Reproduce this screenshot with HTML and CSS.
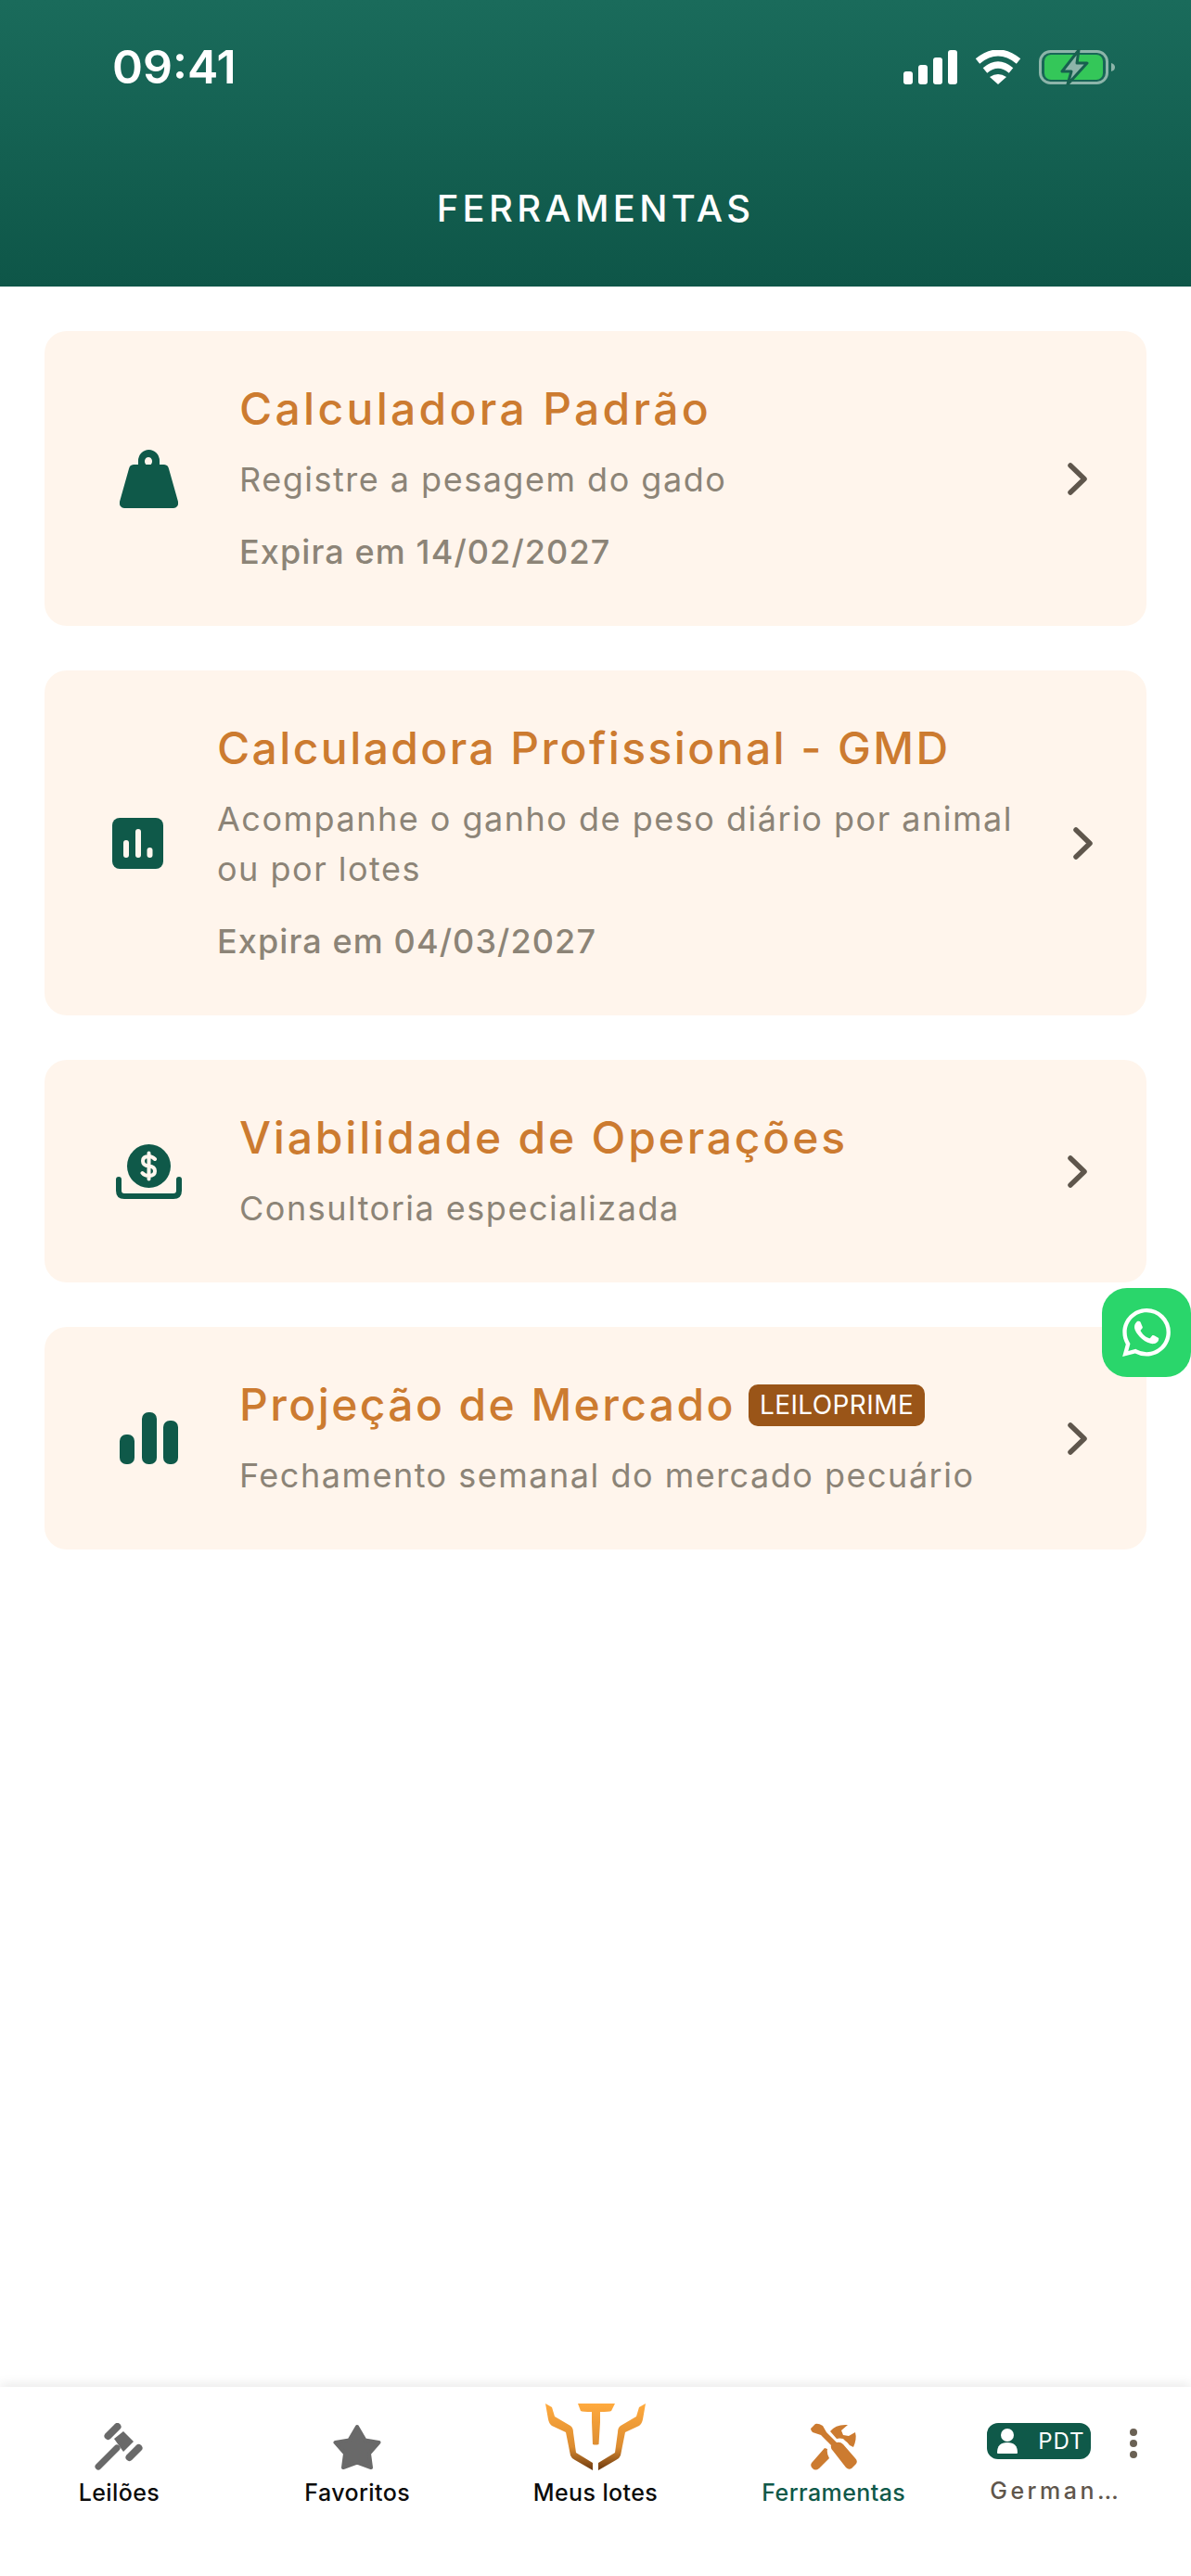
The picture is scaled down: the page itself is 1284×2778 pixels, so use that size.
FILE: index.html
```html
<!DOCTYPE html>
<html lang="pt-BR">
<head>
  <meta charset="UTF-8" />
  <meta name="viewport" content="width=device-width, initial-scale=1.0"/>
  <title>Ferramentas</title>
  <link rel="stylesheet" href="styles.css">
</head>
<body>
  <header class="header">
    <div class="status-bar">
      <span class="status-time">09:41</span>
      <div class="status-icons">
        <svg width="58" height="37" viewBox="0 0 58 37" fill="#fff">
          <rect x="0" y="23" width="10" height="14" rx="3"/>
          <rect x="16" y="16" width="10" height="21" rx="3"/>
          <rect x="32" y="8" width="10" height="29" rx="3"/>
          <rect x="48" y="0" width="10" height="37" rx="3"/>
        </svg>
        <svg width="50" height="37" viewBox="0 0 50 37" fill="none" stroke="#fff" stroke-width="7">
          <path d="M3 12 Q25 -6 47 12"/>
          <path d="M11 22 Q25 10 39 22"/>
          <path d="M16 29 Q25 23 34 29 L25 37Z" fill="#fff" stroke="none"/>
        </svg>
        <svg width="82" height="39" viewBox="0 0 82 39" fill="none">
          <rect x="1.5" y="2.5" width="72" height="34" rx="11" stroke="#8db5aa" stroke-width="3"/>
          <rect x="6" y="6" width="63" height="27" rx="7" fill="#34c759"/>
          <path d="M78 15 Q82 16 82 19.500 Q82 23 78 24Z" fill="#8db5aa"/>
          <path d="M43 1 L25 24 H35 L31 38 L52 15 H41Z" fill="#8db5aa" stroke="#17604f" stroke-width="3" stroke-linejoin="round"/>
        </svg>
      </div>
    </div>
    <h1 class="header-title">FERRAMENTAS</h1>
  </header>

  <main class="tools">
    <a class="card">
      <span class="card-icon">
        <svg width="63" height="63" viewBox="0 0 63 63" fill="#0f5949">
          <path fill-rule="evenodd" d="M20 17 V12 a11.500 12 0 0 1 23 0 V17Z M31 8 a4 4.500 0 1 0 .01 0Z"/>
          <path d="M15 16 H48 a5.500 5.500 0 0 1 5 4.500 L63 56 a5.500 5.500 0 0 1 -5.500 7 H5.500 a5.500 5.500 0 0 1 -5.500 -7 L10 20.500 a5.500 5.500 0 0 1 5 -4.500Z"/>
        </svg>
      </span>
      <div class="card-text">
        <h2 class="card-title title-loose">Calculadora Padrão</h2>
        <p class="card-desc">Registre a pesagem do gado</p>
        <p class="card-expiry">Expira em 14/02/2027</p>
      </div>
      <svg class="chevron" width="21" height="35" viewBox="0 0 21 35" fill="none"><path d="M3 3 L18 17.500 L3 32"/></svg>
    </a>

    <a class="card card-pro">
      <span class="card-icon">
        <svg width="55" height="55" viewBox="0 0 55 55">
          <rect width="55" height="55" rx="8" fill="#0f5949"/>
          <g fill="#fff6ee">
            <rect x="12" y="24" width="6" height="19" rx="3"/>
            <rect x="25" y="12" width="6" height="31" rx="3"/>
            <rect x="37.500" y="32" width="6" height="11" rx="3"/>
          </g>
        </svg>
      </span>
      <div class="card-text">
        <h2 class="card-title title-tight">Calculadora Profissional - GMD</h2>
        <p class="card-desc">Acompanhe o ganho de peso diário por animal<br>ou por lotes</p>
        <p class="card-expiry">Expira em 04/03/2027</p>
      </div>
      <svg class="chevron" width="21" height="35" viewBox="0 0 21 35" fill="none"><path d="M3 3 L18 17.500 L3 32"/></svg>
    </a>

    <a class="card">
      <span class="card-icon">
        <svg width="71" height="59" viewBox="0 0 71 59">
          <circle cx="35.500" cy="23.500" r="23.500" fill="#0f5949"/>
          <path d="M42 16 Q39 13 35.500 13 Q29 13 29 18 Q29 23 35.500 23.500 Q42 24 42 29 Q42 34 35.500 34 Q31 34 28.500 31 M35.500 9.500 V37.500" fill="none" stroke="#fff6ee" stroke-width="4" stroke-linecap="round"/>
          <path d="M3 38 V50 Q3 56 9 56 H62 Q68 56 68 50 V38" fill="none" stroke="#0f5949" stroke-width="6" stroke-linecap="round"/>
        </svg>
      </span>
      <div class="card-text">
        <h2 class="card-title">Viabilidade de Operações</h2>
        <p class="card-desc">Consultoria especializada</p>
      </div>
      <svg class="chevron" width="21" height="35" viewBox="0 0 21 35" fill="none"><path d="M3 3 L18 17.500 L3 32"/></svg>
    </a>

    <a class="card">
      <span class="card-icon">
        <svg width="63" height="56" viewBox="0 0 63 56" fill="#0f5949">
          <rect x="0" y="24" width="16" height="32" rx="7"/>
          <rect x="24" y="0" width="16" height="56" rx="7"/>
          <rect x="47" y="9" width="16" height="47" rx="7"/>
        </svg>
      </span>
      <div class="card-text">
        <div class="card-title-row">
          <h2 class="card-title title-tight">Projeção de Mercado</h2>
          <span class="tag">LEILOPRIME</span>
        </div>
        <p class="card-desc">Fechamento semanal do mercado pecuário</p>
      </div>
      <svg class="chevron" width="21" height="35" viewBox="0 0 21 35" fill="none"><path d="M3 3 L18 17.500 L3 32"/></svg>
    </a>
  </main>

  <a class="whatsapp">
    <svg width="52" height="52" viewBox="0 0 24 24" fill="#fff"><path d="M17.472 14.382c-.297-.149-1.758-.867-2.03-.967-.273-.099-.471-.148-.67.15-.197.297-.767.966-.94 1.164-.173.199-.347.223-.644.075-.297-.15-1.255-.463-2.39-1.475-.883-.788-1.48-1.761-1.653-2.059-.173-.297-.018-.458.13-.606.134-.133.298-.347.446-.52.149-.174.198-.298.298-.497.099-.198.05-.371-.025-.52-.075-.149-.669-1.612-.916-2.207-.242-.579-.487-.5-.669-.51-.173-.008-.371-.01-.57-.01-.198 0-.52.074-.792.372-.272.297-1.04 1.016-1.04 2.479 0 1.462 1.065 2.875 1.213 3.074.149.198 2.096 3.2 5.077 4.487.709.306 1.262.489 1.694.625.712.227 1.36.195 1.871.118.571-.085 1.758-.719 2.006-1.413.248-.694.248-1.289.173-1.413-.074-.124-.272-.198-.57-.347m-5.421 7.403h-.004a9.87 9.87 0 01-5.031-1.378l-.361-.214-3.741.982.998-3.648-.235-.374a9.86 9.86 0 01-1.51-5.26c.001-5.45 4.436-9.884 9.888-9.884 2.64 0 5.122 1.03 6.988 2.898a9.825 9.825 0 012.893 6.994c-.003 5.45-4.437 9.884-9.885 9.884m8.413-18.297A11.815 11.815 0 0012.05 0C5.495 0 .16 5.335.157 11.892c0 2.096.547 4.142 1.588 5.945L.057 24l6.305-1.654a11.882 11.882 0 005.683 1.448h.005c6.554 0 11.89-5.335 11.893-11.893a11.821 11.821 0 00-3.48-8.413z"/></svg>
  </a>

  <nav class="tabbar">
    <a class="tab">
      <span class="tab-icon">
        <svg width="52" height="51" viewBox="0 0 52 51" fill="none" stroke="#696969" stroke-linecap="round">
          <path d="M14.500 14 L24.500 4" stroke-width="8"/>
          <path d="M37.500 37 L47.500 27" stroke-width="8"/>
          <path d="M21 17 L31 9 L42 20 L31 31Z" fill="#696969" stroke="none"/>
          <path d="M4 47 L24 27" stroke-width="7"/>
        </svg>
      </span>
      <span class="tab-label">Leilões</span>
    </a>
    <a class="tab">
      <span class="tab-icon">
        <svg width="52" height="50" viewBox="0 0 52 50"><polygon points="26,3 34.500,17.500 49.500,20 39,32 41,47 26,41.500 11,47 13,32 2.500,20 17.500,17.500" fill="#696969" stroke="#696969" stroke-width="4" stroke-linejoin="round"/></svg>
      </span>
      <span class="tab-label">Favoritos</span>
    </a>
    <a class="tab">
      <span class="tab-icon">
        <svg width="108" height="72" viewBox="0 0 108 72">
          <defs>
            <linearGradient id="logoGrad" gradientUnits="userSpaceOnUse" x1="0" y1="0" x2="0" y2="72">
              <stop offset="0" stop-color="#ffaa3e"/>
              <stop offset=".65" stop-color="#dc8c30"/>
              <stop offset="1" stop-color="#6b380f"/>
            </linearGradient>
          </defs>
          <g fill="url(#logoGrad)">
            <path d="M35 0 H75 L71 8 Q69 9 59 9 L59 20 L57.500 44 Q54 45 51 44 L50 20 L50 9 Q40 9 38 8Z"/>
            <path d="M0 0 L7 4 L10 14 L27 24 Q30 26 30 31 L33 53 L51 64 L51 72 L32 61 Q28 59 27 56 L22 31 L7 24 Q4 22 3 17Z"/>
            <path d="M108 0 L101 4 L98 14 L81 24 Q78 26 78 31 L75 53 L57 64 L57 72 L76 61 Q80 59 81 56 L86 31 L101 24 Q104 22 105 17Z"/>
          </g>
        </svg>
      </span>
      <span class="tab-label">Meus lotes</span>
    </a>
    <a class="tab tab-active">
      <span class="tab-icon">
        <svg width="50" height="51" viewBox="0 0 50 51" fill="#cc7b30">
          <path d="M5 1 L0 6 Q0 8 2 10 L11 13 L22 24 Q21 27 24 30 L38 48 Q41 51 44 49 L49 44 Q51 41 48 38 L35 23 Q32 20 28 21 L17 10 L13 3 Q8 0 5 1Z"/>
          <path d="M21 9 Q27 1 40 2 L33 8 L35 13 L41 14 L48 10 Q50 17 46 26 L42 24 Q40 21 37 19 L35 17 Q31 16 28 17Z"/>
          <path d="M15 27 L18 28 Q17 33 20 38 L9 49 Q5 52 2 49 Q-1 46 1 43Z"/>
        </svg>
      </span>
      <span class="tab-label">Ferramentas</span>
    </a>
    <div class="tab tab-profile">
      <div class="profile-row">
        <span class="profile-badge">
          <svg width="22" height="27" viewBox="0 0 22 27" fill="#fff">
            <circle cx="11" cy="7" r="7"/>
            <path d="M0 26 Q0 15 11 15 Q22 15 22 26 Q22 27 21 27 H1 Q0 27 0 26Z"/>
          </svg>
          <span class="profile-code">PDT</span>
        </span>
        <span class="dots"><i></i><i></i><i></i></span>
      </div>
      <span class="profile-name">German…</span>
    </div>
  </nav>
</body>
</html>
```

FILE: styles.css
```css
* {
  box-sizing: border-box;
}

body {
  font-family: Inter, 'Noto Sans', sans-serif;
  margin: 0;
  width: 1284px;
  height: 2778px;
  background: #fff;
  display: flex;
  flex-direction: column;
  position: relative;
  overflow: hidden;
}

svg {
  display: block;
}

/* header */
.header {
  height: 309px;
  flex-shrink: 0;
  background: linear-gradient(180deg, #1a6b5b 0%, #0e5648 100%);
  color: #fff;
}

.status-bar {
  display: flex;
  justify-content: space-between;
  align-items: center;
  padding: 44px 82px 0 121px;
  height: 101px;
}

.status-time {
  font-size: 50px;
  font-weight: 600;
  line-height: 57px;
}

.status-icons {
  display: flex;
  align-items: center;
  gap: 19px;
}

.header-title {
  margin: 0;
  padding-top: 100px;
  font-size: 40px;
  font-weight: 500;
  line-height: 48px;
  letter-spacing: 4.3px;
  text-align: center;
}

/* cards */
.tools {
  flex: 1;
  display: flex;
  flex-direction: column;
  gap: 48px;
  padding: 48px 48px 0;
}

.card {
  display: flex;
  align-items: center;
  padding: 48px 64px 48px 48px;
  background: #fff5ec;
  border-radius: 24px;
}

.card-icon {
  flex-shrink: 0;
  width: 128px;
  margin-right: 34px;
  display: flex;
  justify-content: center;
}

.card-pro {
  padding-right: 58px;
}

.card-pro .card-icon {
  width: 105px;
  margin-right: 33px;
}

.card-text {
  flex: 1;
  min-width: 0;
  padding-bottom: 5px;
}

.card-title {
  margin: 0;
  color: #cc7b30;
  font-size: 48px;
  font-weight: 500;
  line-height: 72px;
  letter-spacing: 2.8px;
}

.title-loose {
  letter-spacing: 3.3px;
}

.title-tight {
  letter-spacing: 2.4px;
}

.card-title-row {
  display: flex;
  align-items: center;
  gap: 14px;
}

.card-desc {
  margin: 13px 0 0;
  color: #8c8477;
  font-size: 36px;
  font-weight: 400;
  line-height: 54px;
  letter-spacing: 1.5px;
}

.card-expiry {
  margin: 24px 0 0;
  color: #8c8477;
  font-size: 36px;
  font-weight: 500;
  line-height: 54px;
  letter-spacing: 1.1px;
}

.tag {
  display: block;
  padding: 0 12px;
  background: #9a5518;
  border-radius: 10px;
  color: #fff;
  font-size: 28px;
  line-height: 45px;
  letter-spacing: 0.4px;
}

.chevron {
  flex-shrink: 0;
}

.chevron path {
  stroke: #5f564c;
  stroke-width: 5.500;
  stroke-linecap: round;
  stroke-linejoin: round;
}

/* floating button */
.whatsapp {
  position: absolute;
  left: 1188px;
  top: 1389px;
  width: 96px;
  height: 96px;
  display: flex;
  align-items: center;
  justify-content: center;
  background: #2ad66b;
  border-radius: 27px;
}

/* bottom bar */
.tabbar {
  height: 204px;
  flex-shrink: 0;
  display: grid;
  grid-template-columns: repeat(5, 1fr);
  background: #fff;
  box-shadow: 0 -2px 12px rgba(0, 0, 0, 0.1);
  position: relative;
}

.tab {
  display: flex;
  flex-direction: column;
  align-items: center;
  padding-top: 18px;
}

.tab-icon {
  height: 72px;
  display: flex;
  align-items: flex-end;
}

.tab-label {
  margin-top: 6px;
  color: #0b0b0b;
  font-size: 25px;
  font-weight: 500;
  line-height: 36px;
  letter-spacing: 0.4px;
}

.tab-active .tab-label {
  color: #0f5949;
}

.tab-profile {
  align-items: flex-start;
  padding: 39px 0 0 37px;
}

.profile-row {
  display: flex;
  align-items: center;
  gap: 42px;
}

.profile-badge {
  width: 112px;
  height: 39px;
  display: flex;
  align-items: center;
  gap: 22px;
  padding-left: 11px;
  background: #0f5949;
  border-radius: 12px;
}

.profile-code {
  color: #fff;
  font-size: 24px;
  line-height: 39px;
  letter-spacing: 1px;
}

.dots {
  display: flex;
  flex-direction: column;
  gap: 4px;
  margin-top: 5px;
}

.dots i {
  display: block;
  width: 8px;
  height: 8px;
  border-radius: 50%;
  background: #6a6154;
}

.profile-name {
  margin: 16px 0 0 3px;
  color: #5f564c;
  font-size: 25px;
  font-weight: 500;
  line-height: 36px;
  letter-spacing: 3.5px;
}
```
